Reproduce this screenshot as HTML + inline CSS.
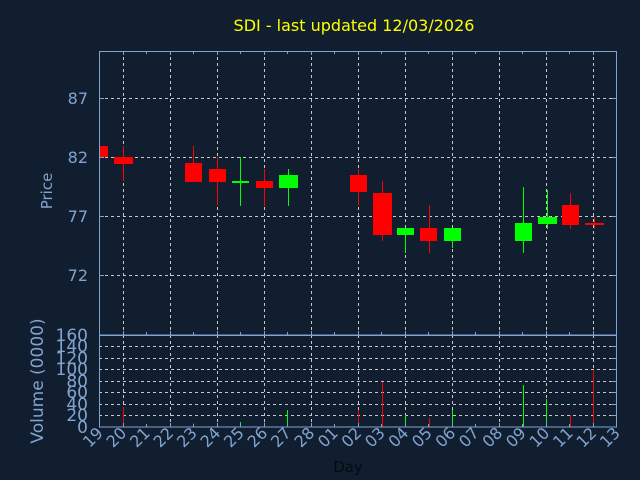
<!DOCTYPE html>
<html><head><meta charset="utf-8"><style>
html,body{margin:0;padding:0;background:#111e2f;}
svg{display:block}
text{font-family:"DejaVu Sans","Liberation Sans",sans-serif;}
</style></head><body>
<svg width="640" height="480" viewBox="0 0 640 480" xmlns="http://www.w3.org/2000/svg">
<rect width="640" height="480" fill="#111e2f"/>
<text x="354" y="31" fill="#ffff00" font-size="16" text-anchor="middle">SDI - last updated 12/03/2026</text>
<!-- price grid -->
<g stroke="#c8c8c8" stroke-dasharray="3,3" stroke-width="1">
<line x1="99" y1="98.5" x2="617" y2="98.5"/><line x1="99" y1="157.5" x2="617" y2="157.5"/><line x1="99" y1="216.5" x2="617" y2="216.5"/><line x1="99" y1="275.5" x2="617" y2="275.5"/>
<line x1="123.5" y1="51" x2="123.5" y2="335"/><line x1="170.5" y1="51" x2="170.5" y2="335"/><line x1="217.5" y1="51" x2="217.5" y2="335"/><line x1="264.5" y1="51" x2="264.5" y2="335"/><line x1="311.5" y1="51" x2="311.5" y2="335"/><line x1="358.5" y1="51" x2="358.5" y2="335"/><line x1="405.5" y1="51" x2="405.5" y2="335"/><line x1="452.5" y1="51" x2="452.5" y2="335"/><line x1="499.5" y1="51" x2="499.5" y2="335"/><line x1="546.5" y1="51" x2="546.5" y2="335"/><line x1="593.5" y1="51" x2="593.5" y2="335"/>
<line x1="123.5" y1="335" x2="123.5" y2="427"/><line x1="170.5" y1="335" x2="170.5" y2="427"/><line x1="217.5" y1="335" x2="217.5" y2="427"/><line x1="264.5" y1="335" x2="264.5" y2="427"/><line x1="311.5" y1="335" x2="311.5" y2="427"/><line x1="358.5" y1="335" x2="358.5" y2="427"/><line x1="405.5" y1="335" x2="405.5" y2="427"/><line x1="452.5" y1="335" x2="452.5" y2="427"/><line x1="499.5" y1="335" x2="499.5" y2="427"/><line x1="546.5" y1="335" x2="546.5" y2="427"/><line x1="593.5" y1="335" x2="593.5" y2="427"/>
<line x1="99" y1="346.5" x2="617" y2="346.5"/><line x1="99" y1="358.5" x2="617" y2="358.5"/><line x1="99" y1="369.5" x2="617" y2="369.5"/><line x1="99" y1="381.5" x2="617" y2="381.5"/><line x1="99" y1="392.5" x2="617" y2="392.5"/><line x1="99" y1="404.5" x2="617" y2="404.5"/><line x1="99" y1="415.5" x2="617" y2="415.5"/>
</g>
<!-- candles -->
<g stroke-width="1">
<rect x="99" y="146" width="9" height="11" fill="#ff0000"/>
<line x1="123.5" y1="146" x2="123.5" y2="181" stroke="#ff0000"/><rect x="114" y="157" width="19" height="7" fill="#ff0000"/>
<line x1="193.5" y1="146" x2="193.5" y2="182" stroke="#ff0000"/><rect x="185" y="163" width="17" height="19" fill="#ff0000"/>
<line x1="217.5" y1="157" x2="217.5" y2="205" stroke="#ff0000"/><rect x="209" y="169" width="17" height="13" fill="#ff0000"/>
<line x1="240.5" y1="157" x2="240.5" y2="206" stroke="#00ff00"/><rect x="232" y="181" width="17" height="2" fill="#00ff00"/>
<line x1="264.5" y1="169" x2="264.5" y2="206" stroke="#ff0000"/><rect x="256" y="181" width="17" height="7" fill="#ff0000"/>
<line x1="288.5" y1="169" x2="288.5" y2="206" stroke="#00ff00"/><rect x="279" y="175" width="19" height="13" fill="#00ff00"/>
<line x1="358.5" y1="169" x2="358.5" y2="205" stroke="#ff0000"/><rect x="350" y="175" width="17" height="17" fill="#ff0000"/>
<line x1="382.5" y1="181" x2="382.5" y2="241" stroke="#ff0000"/><rect x="373" y="193" width="19" height="42" fill="#ff0000"/>
<line x1="405.5" y1="228" x2="405.5" y2="253" stroke="#00ff00"/><rect x="397" y="228" width="17" height="7" fill="#00ff00"/>
<line x1="429.5" y1="205" x2="429.5" y2="253" stroke="#ff0000"/><rect x="420" y="228" width="17" height="13" fill="#ff0000"/>
<line x1="452.5" y1="228" x2="452.5" y2="248" stroke="#00ff00"/><rect x="444" y="228" width="17" height="13" fill="#00ff00"/>
<line x1="523.5" y1="187" x2="523.5" y2="253" stroke="#00ff00"/><rect x="515" y="223" width="17" height="18" fill="#00ff00"/>
<line x1="547.5" y1="190" x2="547.5" y2="229" stroke="#00ff00"/><rect x="538" y="217" width="19" height="7" fill="#00ff00"/>
<line x1="570.5" y1="193" x2="570.5" y2="229" stroke="#ff0000"/><rect x="562" y="205" width="17" height="20" fill="#ff0000"/>
<line x1="594.5" y1="217" x2="594.5" y2="229" stroke="#ff0000"/><rect x="585" y="223" width="19" height="2" fill="#ff0000"/>
</g>
<!-- volume bars -->
<g stroke-width="1">
<line x1="123.5" y1="407" x2="123.5" y2="427" stroke="#ff0000"/>
<line x1="193.5" y1="423" x2="193.5" y2="427" stroke="#ff0000"/>
<line x1="217.5" y1="423" x2="217.5" y2="427" stroke="#ff0000"/>
<line x1="240.5" y1="422" x2="240.5" y2="427" stroke="#00ff00"/>
<line x1="264.5" y1="422" x2="264.5" y2="427" stroke="#ff0000"/>
<line x1="287.5" y1="410" x2="287.5" y2="427" stroke="#00ff00"/>
<line x1="358.5" y1="410" x2="358.5" y2="427" stroke="#ff0000"/>
<line x1="382.5" y1="382" x2="382.5" y2="427" stroke="#ff0000"/>
<line x1="405.5" y1="415" x2="405.5" y2="427" stroke="#00ff00"/>
<line x1="429.5" y1="418" x2="429.5" y2="427" stroke="#ff0000"/>
<line x1="452.5" y1="410" x2="452.5" y2="427" stroke="#00ff00"/>
<line x1="523.5" y1="385" x2="523.5" y2="427" stroke="#00ff00"/>
<line x1="546.5" y1="399" x2="546.5" y2="427" stroke="#00ff00"/>
<line x1="570.5" y1="415" x2="570.5" y2="427" stroke="#ff0000"/>
<line x1="593.5" y1="370" x2="593.5" y2="427" stroke="#ff0000"/>
</g>
<!-- axes -->
<g stroke="#80a4d0" fill="none" stroke-width="1">
<rect x="99.5" y="51.5" width="517" height="283.5"/>
<rect x="99.5" y="335.5" width="517" height="91.5"/>
<path d="M123.5 51v4M146.5 51v3M170.5 51v4M193.5 51v3M217.5 51v4M240.5 51v3M264.5 51v4M287.5 51v3M311.5 51v4M334.5 51v3M358.5 51v4M381.5 51v3M405.5 51v4M428.5 51v3M452.5 51v4M475.5 51v3M499.5 51v4M522.5 51v3M546.5 51v4M569.5 51v3M593.5 51v4"/>
<path d="M123.5 335v-4M146.5 335v-3M170.5 335v-4M193.5 335v-3M217.5 335v-4M240.5 335v-3M264.5 335v-4M287.5 335v-3M311.5 335v-4M334.5 335v-3M358.5 335v-4M381.5 335v-3M405.5 335v-4M428.5 335v-3M452.5 335v-4M475.5 335v-3M499.5 335v-4M522.5 335v-3M546.5 335v-4M569.5 335v-3M593.5 335v-4"/>
<path d="M123.5 427v-4M146.5 427v-3M170.5 427v-4M193.5 427v-3M217.5 427v-4M240.5 427v-3M264.5 427v-4M287.5 427v-3M311.5 427v-4M334.5 427v-3M358.5 427v-4M381.5 427v-3M405.5 427v-4M428.5 427v-3M452.5 427v-4M475.5 427v-3M499.5 427v-4M522.5 427v-3M546.5 427v-4M569.5 427v-3M593.5 427v-4"/>
<path d="M99 98.5h5M99 157.5h5M99 216.5h5M99 275.5h5M617 98.5h-5M617 157.5h-5M617 216.5h-5M617 275.5h-5"/>
<path d="M617 346.5h-6M617 358.5h-6M617 369.5h-6M617 381.5h-6M617 392.5h-6M617 404.5h-6M617 415.5h-6"/>
</g>
<g fill="#80a4d0" font-size="16" text-anchor="end">
<text x="88" y="104">87</text><text x="88" y="163">82</text><text x="88" y="222">77</text><text x="88" y="281">72</text>
</g>
<g fill="#80a4d0" font-size="17" text-anchor="end">
<text x="88" y="341">160</text><text x="88" y="352">140</text><text x="88" y="364">120</text><text x="88" y="375">100</text><text x="88" y="387">80</text><text x="88" y="398">60</text><text x="88" y="410">40</text><text x="88" y="421">20</text><text x="88" y="433">0</text>
</g>
<text transform="translate(52,191) rotate(-90)" fill="#80a4d0" font-size="15" text-anchor="middle">Price</text>
<text transform="translate(43,381) rotate(-90)" fill="#80a4d0" font-size="17" text-anchor="middle">Volume (0000)</text>
<g fill="#80a4d0" font-size="16" text-anchor="end">
<text transform="translate(104,434) rotate(-45)">19</text>
<text transform="translate(127.5,434) rotate(-45)">20</text>
<text transform="translate(151,434) rotate(-45)">21</text>
<text transform="translate(174.5,434) rotate(-45)">22</text>
<text transform="translate(198,434) rotate(-45)">23</text>
<text transform="translate(221.5,434) rotate(-45)">24</text>
<text transform="translate(245,434) rotate(-45)">25</text>
<text transform="translate(268.5,434) rotate(-45)">26</text>
<text transform="translate(292,434) rotate(-45)">27</text>
<text transform="translate(315.5,434) rotate(-45)">28</text>
<text transform="translate(339,434) rotate(-45)">01</text>
<text transform="translate(362.5,434) rotate(-45)">02</text>
<text transform="translate(386,434) rotate(-45)">03</text>
<text transform="translate(409.5,434) rotate(-45)">04</text>
<text transform="translate(433,434) rotate(-45)">05</text>
<text transform="translate(456.5,434) rotate(-45)">06</text>
<text transform="translate(480,434) rotate(-45)">07</text>
<text transform="translate(503.5,434) rotate(-45)">08</text>
<text transform="translate(527,434) rotate(-45)">09</text>
<text transform="translate(550.5,434) rotate(-45)">10</text>
<text transform="translate(574,434) rotate(-45)">11</text>
<text transform="translate(597.5,434) rotate(-45)">12</text>
<text transform="translate(621,434) rotate(-45)">13</text>
</g>
<text x="348" y="472" fill="#050a10" font-size="15" text-anchor="middle">Day</text>
</svg>
</body></html>
